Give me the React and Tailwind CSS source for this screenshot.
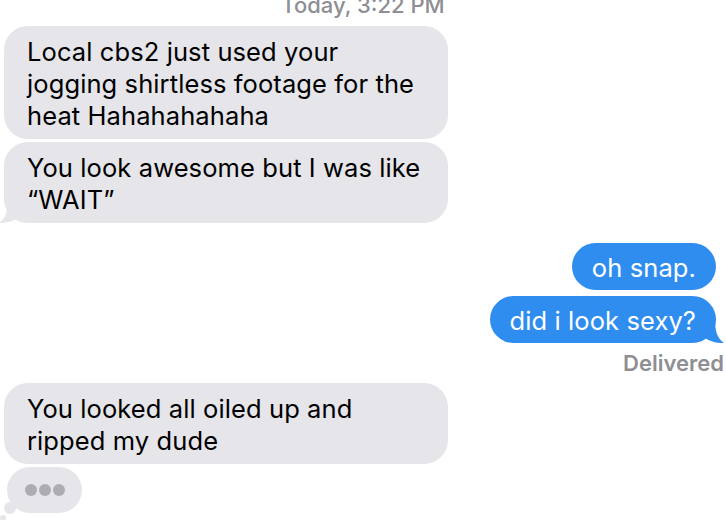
const GRAY = 'bg-[#e5e5ea]';

const LeftTail = () => (
  <svg className="absolute -left-[5px] bottom-0" width="24" height="24" viewBox="0 0 24 24">
    <path d="M9 0 C9 12 7 19 0 24 C9 24 15 22 20 18 L20 0 Z" fill="#e5e5ea" />
  </svg>
);

const RightTail = () => (
  <svg className="absolute -right-[8px] bottom-0" width="24" height="24" viewBox="0 0 24 24">
    <path d="M15 0 C15 12 17 19 24 24 C15 24 9 22 4 18 L4 0 Z" fill="#2f8df0" />
  </svg>
);

const Incoming = ({ children, tail, className = '' }) => (
  <div className={`relative ml-[4px] w-[444px] rounded-[24px] ${GRAY} pl-[23px] pr-[20px] pt-[10px] pb-[7px] text-[25.5px] leading-[32px] tracking-[0.1px] text-black ${className}`}>
    {tail && <LeftTail />}
    <span className="relative">{children}</span>
  </div>
);

const Outgoing = ({ children, tail, className = '' }) => (
  <div className={`relative mr-[10px] self-end rounded-[24px] bg-[#2f8df0] px-[20px] pt-[9px] pb-[6px] text-[25.5px] leading-[32px] tracking-[0.1px] text-white ${className}`}>
    {tail && <RightTail />}
    <span className="relative">{children}</span>
  </div>
);

export default function App() {
  return (
    <div className="relative h-[520px] w-[726px] overflow-hidden bg-white font-['Inter',sans-serif]">
      <div className="flex flex-col">
        <div className="-mt-[7px] text-center text-[22px] font-medium leading-[24px] text-[#8e8e93]">
          Today, 3:22 PM
        </div>
        <Incoming className="mt-[9px]">
          Local cbs2 just used your jogging shirtless footage for the heat Hahahahahaha
        </Incoming>
        <Incoming tail className="mt-[3px]">
          You look awesome but I was like “WAIT”
        </Incoming>
        <Outgoing className="mt-[20px]">oh snap.</Outgoing>
        <Outgoing tail className="mt-[6px]">did i look sexy?</Outgoing>
        <div className="mr-[2px] mt-[7px] self-end text-[22px] font-semibold leading-[26px] text-[#8e8e93]">
          Delivered
        </div>
        <Incoming className="mt-[7px]">
          You looked all oiled up and ripped my dude
        </Incoming>
        <div className="relative ml-[7px] mt-[3px] h-[46px] w-[75px]">
          <div className="absolute left-[-3px] top-[35px] h-[12px] w-[12px] rounded-full bg-[#e5e5ea]" />
          <div className="absolute left-[-7px] top-[48px] h-[6px] w-[6px] rounded-full bg-[#e5e5ea]" />
          <div className={`relative flex h-full w-full items-center justify-center gap-[2px] rounded-full ${GRAY}`}>
            <span className="h-[12px] w-[12px] rounded-full bg-[#acacb1]" />
            <span className="h-[12px] w-[12px] rounded-full bg-[#acacb1]" />
            <span className="h-[12px] w-[12px] rounded-full bg-[#acacb1]" />
          </div>
        </div>
      </div>
    </div>
  );
}
